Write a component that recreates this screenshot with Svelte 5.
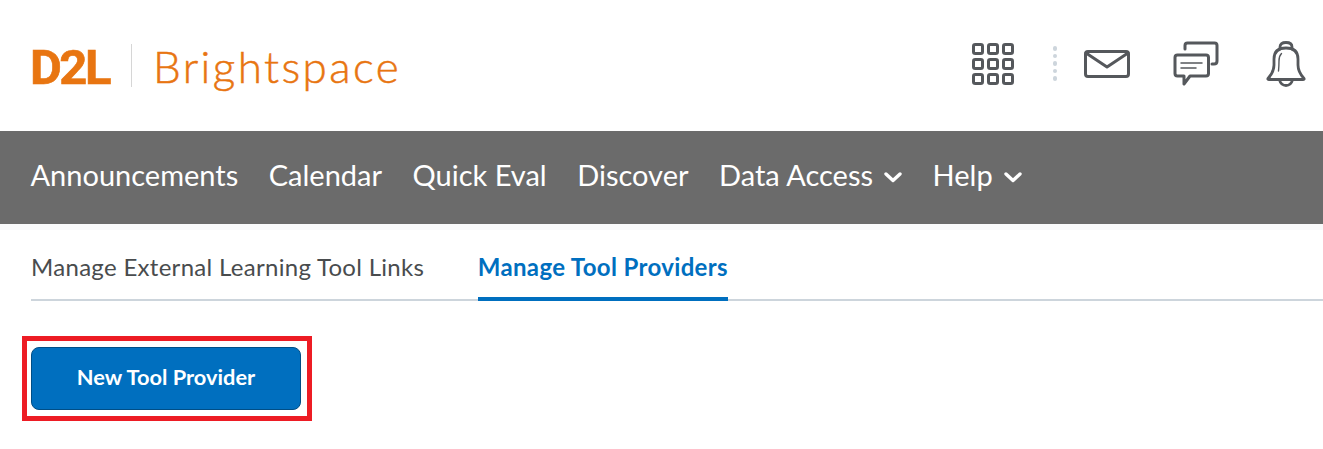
<script>
  const navItems = [
    { label: 'Announcements' },
    { label: 'Calendar' },
    { label: 'Quick Eval' },
    { label: 'Discover' },
    { label: 'Data Access', menu: true },
    { label: 'Help', menu: true }
  ];
</script>

<div class="page">
  <header class="top">
    <div class="logo">
      <span class="d2l">D2L</span>
      <span class="rule"></span>
      <span class="bright">Brightspace</span>
    </div>
    <div class="tools">
      <svg class="grid" width="42" height="42" viewBox="0 0 42 42" fill="none" stroke="#55585c" stroke-width="3">
        {#each [0, 15, 30] as y}
          {#each [0, 15, 30] as x}
            <rect x={x + 1.5} y={y + 1.5} width="9" height="9" rx="1.8" />
          {/each}
        {/each}
      </svg>
      <div class="dots"><i></i><i></i><i></i><i></i><i></i></div>
      <svg class="mail" width="46" height="28" viewBox="0 0 46 28" fill="none" stroke="#55585c" stroke-width="3" stroke-linejoin="round" stroke-linecap="round">
        <rect x="1.500" y="1.500" width="43" height="25" rx="2.500" />
        <path d="M2 3l21 14L44 3" />
      </svg>
      <svg class="chat" width="46" height="46" viewBox="0 0 46 46" fill="none" stroke="#55585c" stroke-linejoin="round" stroke-linecap="round">
        <path stroke-width="3" d="M12 8V4.500Q12 2 14.500 2H41.500Q44 2 44 4.500V20Q44 23 41 23H39" />
        <path stroke-width="3" d="M4.500 14H33Q35.500 14 35.500 16.500V32.500Q35.500 35 33 35H17L11 43V35H4.500Q2 35 2 32.500V16.500Q2 14 4.500 14Z" />
        <path stroke-width="1.500" d="M8 22H29M8 27H23" />
      </svg>
      <svg class="bell" width="40" height="46" viewBox="0 0 40 46" fill="none" stroke="#55585c" stroke-linejoin="round" stroke-linecap="round">
        <path stroke-width="2.800" d="M14 8V6Q14 1.500 20 1.500T26 6V8" />
        <path stroke-width="2.800" d="M2 37.500Q8 31 8 24V18Q8 7 20 7T32 18V24Q32 31 38 37.500Q38.500 38.500 37 38.500H3Q1.500 38.500 2 37.500Z" />
        <path stroke-width="2.800" d="M13.500 39Q15 44.500 20 44.500T26.500 39" />
        <path stroke-width="1.400" d="M12.500 30Q13 25 13 20Q13 15 15.500 12.500" />
      </svg>
    </div>
  </header>

  <nav class="nav">
    {#each navItems as item}
      <a class="nav-item" href="#top">
        {item.label}
        {#if item.menu}
          <svg width="18" height="12" viewBox="0 0 18 12" fill="none" stroke="#fff" stroke-width="3.400" stroke-linecap="round" stroke-linejoin="round">
            <path d="M2 3l7 6.500 7-6.500" />
          </svg>
        {/if}
      </a>
    {/each}
  </nav>
  <div class="strip"></div>

  <div class="tabs">
    <a class="tab" href="#top">Manage External Learning Tool Links</a>
    <a class="tab active" href="#top">Manage Tool Providers</a>
  </div>

  <div class="highlight">
    <button class="primary" type="button"><span>New Tool Provider</span></button>
  </div>
</div>

<style>
  :global(body) {
    margin: 0;
    background: #fff;
  }
  .page {
    font-family: Lato, "Liberation Sans", sans-serif;
    width: 1323px;
    height: 449px;
    overflow: hidden;
  }
  .top {
    height: 131px;
    display: flex;
    align-items: center;
    justify-content: space-between;
    box-sizing: border-box;
  }
  .logo {
    display: flex;
    align-items: center;
    margin-left: 30px;
    color: #e87511;
    margin-top: 1px;
  }
  .d2l {
    font-family: Roboto, sans-serif;
    font-weight: 700;
    font-size: 49px;
    line-height: 44px;
    letter-spacing: -2.500px;
    width: 80px;
    white-space: nowrap;
    padding-top: 3px;
    -webkit-text-stroke: 0.6px #e87511;
  }
  .rule {
    width: 1px;
    height: 43px;
    background: #d6d6d6;
    margin: -2px 21px 0 21px;
  }
  .bright {
    font-weight: 300;
    font-size: 44px;
    line-height: 50px;
    letter-spacing: 2.400px;
    -webkit-text-stroke: 0.5px #e87511;
  }
  .tools {
    display: flex;
    align-items: center;
    margin-top: -4px;
    padding-right: 17px;
  }
  .grid { margin-right: 40px; }
  .dots {
    display: flex;
    flex-direction: column;
    gap: 3px;
    margin-right: 27px;
    margin-left: -1px;
  }
  .dots i {
    display: block;
    width: 4.500px;
    height: 4.500px;
    border-radius: 50%;
    background: #cdd5dc;
  }
  .mail { margin-right: 43px; }
  .chat { margin-right: 47px; }

  .nav {
    height: 93px;
    background: #6b6b6b;
    display: flex;
    align-items: center;
    padding-left: 30.500px;
    padding-bottom: 6px;
    box-sizing: border-box;
    gap: 30.500px;
  }
  .nav-item {
    color: #fff;
    text-decoration: none;
    font-size: 29px;
    line-height: 34px;
    display: flex;
    align-items: center;
    gap: 11px;
  }
  .nav-item svg { margin-top: 4px; }
  .strip {
    height: 6px;
    background: #f9fafb;
  }

  .tabs {
    margin-left: 31px;
    height: 71px;
    box-sizing: border-box;
    border-bottom: 2px solid #cdd5dc;
    display: flex;
    gap: 53.500px;
  }
  .tab {
    color: #494c4e;
    text-decoration: none;
    font-size: 24px;
    line-height: 28px;
    letter-spacing: 0.300px;
    padding-top: 23px;
    height: 71px;
    box-sizing: border-box;
  }
  .tab.active {
    color: #006fbf;
    font-weight: 700;
    letter-spacing: 0.350px;
    border-bottom: 4px solid #006fbf;
  }

  .highlight {
    width: 290px;
    height: 85px;
    box-sizing: border-box;
    margin: 35px 0 0 22px;
    border: 5px solid #ed1c24;
    padding: 6px 4px;
  }
  .primary {
    display: block;
    width: 270px;
    height: 63px;
    background: #006fbf;
    border: 1px solid #004e86;
    border-radius: 8px;
    color: #fff;
    font-family: inherit;
    font-weight: 700;
    font-size: 21.800px;
    padding: 0 0 4px;
  }
</style>
